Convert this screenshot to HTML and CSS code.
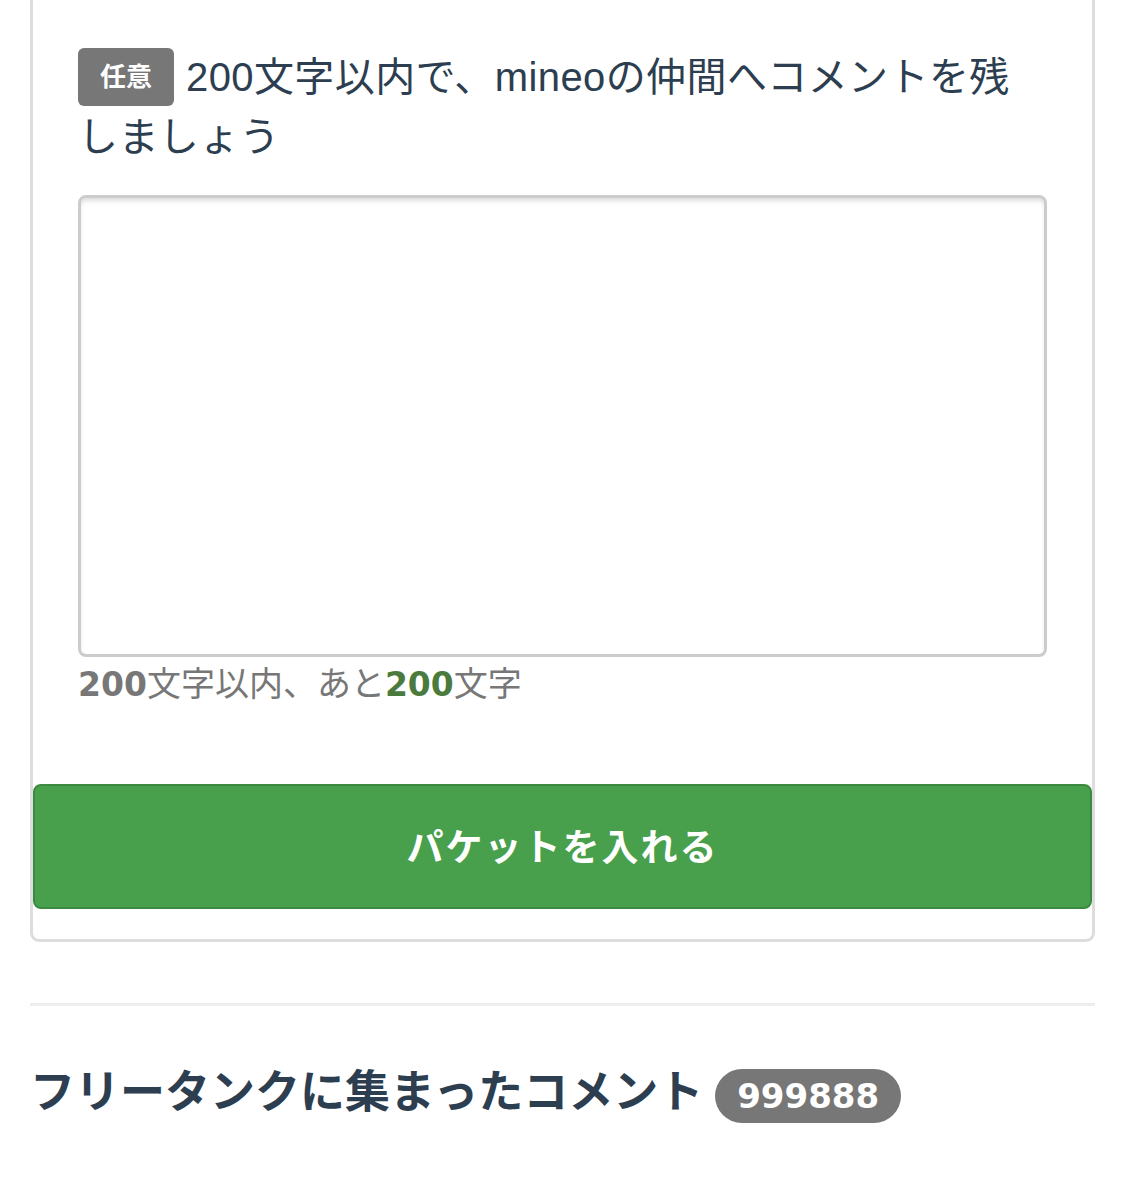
FILE: index.html
```html
<!DOCTYPE html>
<html lang="ja">
<head>
<meta charset="utf-8">
<title>フリータンク</title>
<link rel="stylesheet" href="styles.css">
</head>
<body>
<div class="page">
  <section class="card">
    <div class="form-body">
      <p class="label"><span class="tag">任意</span><span class="label-text">200文字以内で、mineoの仲間へコメントを残しましょう</span></p>
      <textarea class="comment" aria-label="コメント"></textarea>
      <p class="counter"><b class="num">200</b>文字以内、あと<b class="num remain">200</b>文字</p>
    </div>
    <div class="actions">
      <button class="submit" type="button">パケットを入れる</button>
    </div>
  </section>
  <hr class="divider">
  <h2 class="heading">フリータンクに集まったコメント<span class="count">999888</span></h2>
</div>
</body>
</html>
```
FILE: styles.css
```css
html, body {
  margin: 0;
  padding: 0;
  background: #fff;
}
body {
  font-family: "Liberation Sans", "Noto Sans CJK JP", sans-serif;
  color: #2c3e50;
}
.page {
  padding: 0 30px;
}
.card {
  border: 3px solid #dddddd;
  border-top: 0;
  border-radius: 0 0 9px 9px;
  background: #fff;
}
.form-body {
  padding: 47px 45px 0;
}
.label {
  margin: 0;
  font-size: 40px;
  line-height: 60px;
  letter-spacing: 0.4px;
}
.tag {
  display: inline-block;
  vertical-align: top;
  margin: 1px 12px 0 0;
  height: 58px;
  padding: 0 22px;
  border-radius: 6px;
  background: #777777;
  color: #fff;
  font-size: 26px;
  font-weight: bold;
  line-height: 58px;
  letter-spacing: 0;
}
.comment {
  display: block;
  box-sizing: border-box;
  width: 100%;
  height: 462px;
  margin: 28px 0 0;
  border: 3px solid #cccccc;
  border-radius: 8px;
  box-shadow: inset 0 4px 4px -1px rgba(0, 0, 0, 0.13);
  resize: none;
  background: #fff;
}
.counter {
  margin: 4px 0 0;
  font-size: 34px;
  line-height: 46px;
  color: #777777;
}
.num {
  font-family: "DejaVu Sans", "Liberation Sans", sans-serif;
  font-weight: bold;
  font-size: 33px;
  color: #777777;
}
.num.remain {
  color: #4a7b3c;
}
.actions {
  padding: 76px 0 30px;
}
.submit {
  display: block;
  box-sizing: border-box;
  width: 100%;
  height: 125px;
  margin: 0;
  border: 2px solid #3c8a3f;
  border-radius: 8px;
  background: #48a04c;
  color: #fff;
  font-family: "Liberation Sans", "Noto Sans CJK JP", sans-serif;
  font-size: 37px;
  font-weight: bold;
  letter-spacing: 2px;
  padding-bottom: 4px;
}
.divider {
  margin: 61px 0 0;
  height: 3px;
  border: 0;
  background: #eeeeee;
}
.heading {
  margin: 57px 0 0;
  font-size: 45px;
  font-weight: bold;
  line-height: 60px;
  display: flex;
  align-items: center;
  gap: 12px;
}
.count {
  display: inline-block;
  height: 54px;
  padding: 0 22px;
  border-radius: 27px;
  background: #777777;
  color: #fff;
  font-family: "DejaVu Sans", "Liberation Sans", sans-serif;
  font-size: 34px;
  font-weight: bold;
  line-height: 54px;
  margin-top: 6px;
}
```
